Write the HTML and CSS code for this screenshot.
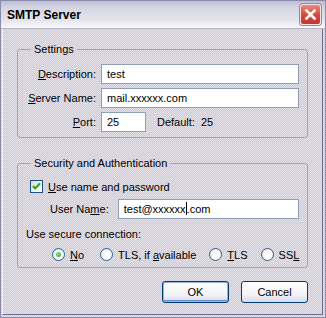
FILE: index.html
```html
<!DOCTYPE html>
<html lang="en">
<head>
    <meta charset="UTF-8">
    <title>SMTP Server</title>
    <link rel="stylesheet" href="styles.css">
</head>
<body>
    <div class="window">
        <div class="titlebar">
            <span class="title">SMTP Server</span>
            <span class="close">
                <svg width="21" height="21" viewBox="0 0 21 21">
                    <path d="M6.5 6.5 L14.5 14.5 M14.5 6.5 L6.5 14.5" stroke="#fff" stroke-width="2.6" stroke-linecap="square"/>
                </svg>
            </span>
        </div>

        <div class="frame">
            <fieldset class="group settings">
                <legend>Settings</legend>
                <div class="form-row">
                    <span class="lbl"><u>D</u>escription:</span>
                    <div class="field wide">test</div>
                </div>
                <div class="form-row">
                    <span class="lbl"><u>S</u>erver Name:</span>
                    <div class="field wide">mail.xxxxxx.com</div>
                </div>
                <div class="form-row">
                    <span class="lbl"><u>P</u>ort:</span>
                    <div class="field port">25</div>
                    <span class="default-lbl">Default:</span>
                    <span class="default-val">25</span>
                </div>
            </fieldset>

            <fieldset class="group security">
                <legend>Security and Authentication</legend>
                <div class="check-row">
                    <span class="checkbox">
                        <svg width="13" height="13" viewBox="0 0 13 13">
                            <path d="M3 6 L5.2 8.4 L10 3.4" fill="none" stroke="#21a121" stroke-width="2"/>
                        </svg>
                    </span>
                    <span><u>U</u>se name and password</span>
                </div>
                <div class="user-row">
                    <span class="user-lbl">User Na<u>m</u>e:</span>
                    <div class="field wide">test@xxxxxx<span class="caret"></span>.com</div>
                </div>
                <div class="secure-lbl">Use secure connection:</div>
                <div class="radio-row">
                    <label class="radio-item first"><span class="radio on"></span><span><u>N</u>o</span></label>
                    <label class="radio-item"><span class="radio"></span><span>TLS, if <u>a</u>vailable</span></label>
                    <label class="radio-item"><span class="radio"></span><span><u>T</u>LS</span></label>
                    <label class="radio-item"><span class="radio"></span><span>SS<u>L</u></span></label>
                </div>
            </fieldset>

            <div class="buttons">
                <button class="btn default">OK</button>
                <button class="btn">Cancel</button>
            </div>
        </div>
    </div>
</body>
</html>
```

FILE: styles.css
```css
:root {
    --dither: repeating-conic-gradient(#cdc9d1 0 25%, #e7e3eb 0 50%) 0 0 / 2px 2px;
    --edge: #8a8aaa;
    --field-border: #8f9fb8;
}

body {
    margin: 0;
    font-family: 'Liberation Sans', Arial, sans-serif;
    font-size: 11px;
    color: #000;
    background: #fff;
}

.window {
    width: 326px;
    height: 318px;
    box-sizing: border-box;
    border: 1px solid var(--edge);
    background: var(--dither);
    display: flex;
    flex-direction: column;
}

.titlebar {
    height: 27px;
    flex: none;
    display: flex;
    align-items: center;
    justify-content: space-between;
    padding: 0 4px 0 6px;
    background: linear-gradient(#bdbdd6 0, #d6d6e3 25%, #e3e3ea 70%, #fafafc 100%);
    border-bottom: 1px solid #b4b4c4;
}

.title {
    font-size: 12px;
    font-weight: bold;
    margin-top: 1px;
}

.close {
    width: 21px;
    height: 21px;
    box-sizing: border-box;
    border: 1px solid #f4e4e4;
    border-radius: 3px;
    background: linear-gradient(#e88a80, #d4473c 55%, #c2372e);
    box-shadow: 0 0 0 1px #b0808a;
    display: flex;
    align-items: center;
    justify-content: center;
}

.close svg {
    margin: -1px;
}

.frame {
    flex: 1;
    margin: 0 2px 2px 1px;
    border-left: 1px solid #f2f2f6;
    border-right: 1px solid #6d6d92;
    border-bottom: 1px solid #6d6d92;
    padding: 0 14px 0 14px;
}

.group {
    margin: 0;
    padding: 0 8px;
    border: 1px solid #a6a6a6;
    border-radius: 3px;
    min-width: 0;
}

.group legend {
    margin-left: 5px;
    padding: 0 3px;
    line-height: 13px;
}

.settings {
    margin-top: 14px;
    padding-top: 8px;
    padding-bottom: 5px;
}

.security {
    margin-top: 19px;
    padding-top: 10px;
    padding-bottom: 6px;
}

.form-row {
    display: flex;
    align-items: center;
    height: 20px;
    margin-bottom: 4px;
}

.form-row:last-child {
    margin-bottom: 0;
}

.lbl {
    width: 70px;
    text-align: right;
    margin-right: 5px;
    flex: none;
}

.field {
    height: 20px;
    box-sizing: border-box;
    border: 1px solid var(--field-border);
    background: #fff;
    padding-left: 5px;
    line-height: 18px;
    white-space: nowrap;
}

.wide {
    flex: 1;
}

.port {
    width: 45px;
}

.default-lbl {
    margin-left: 11px;
}

.default-val {
    margin-left: 6px;
}

.caret {
    display: inline-block;
    width: 1px;
    height: 13px;
    background: #000;
    vertical-align: -2px;
}

.check-row {
    display: flex;
    align-items: center;
    height: 13px;
    margin-left: 4px;
    gap: 5px;
}

.checkbox {
    width: 13px;
    height: 13px;
    box-sizing: border-box;
    border: 1px solid #1c5180;
    background: linear-gradient(135deg, #dcdcd6, #fff);
    display: block;
}

.checkbox svg {
    display: block;
    margin: -1px;
}

.user-row {
    display: flex;
    align-items: center;
    margin-top: 6px;
    padding-left: 24px;
}

.user-lbl {
    margin-right: 9px;
}

.secure-lbl {
    margin-top: 9px;
    line-height: 13px;
}

.radio-row {
    display: flex;
    align-items: center;
    gap: 13px;
    margin-top: 7px;
    margin-left: 26px;
    height: 13px;
    white-space: nowrap;
}

.radio-item {
    display: flex;
    align-items: center;
    gap: 5px;
    flex: none;
}

.radio-item.first {
    margin-right: 3px;
}

.radio {
    width: 13px;
    height: 13px;
    box-sizing: border-box;
    border-radius: 50%;
    border: 1px solid #2f5f8f;
    background: radial-gradient(circle at 60% 60%, #fff 30%, #dcdcd8 100%);
    position: relative;
}

.radio.on::after {
    content: '';
    position: absolute;
    left: 3px;
    top: 3px;
    width: 5px;
    height: 5px;
    border-radius: 50%;
    background: radial-gradient(circle at 40% 40%, #8ee08e, #21a121);
}

.buttons {
    display: flex;
    justify-content: flex-end;
    gap: 12px;
    margin-top: 13px;
}

.btn {
    width: 67px;
    height: 22px;
    font-family: inherit;
    font-size: 11px;
    color: #000;
    border: 1px solid #003c74;
    border-radius: 3px;
    background: linear-gradient(#ffffff, #f4f4f8 60%, #d8d8e8);
    padding: 0;
}

.btn.default {
    box-shadow: inset 0 0 0 1px #9ab4e0, inset 0 -1px 0 1px #6e8ed8;
}
```
